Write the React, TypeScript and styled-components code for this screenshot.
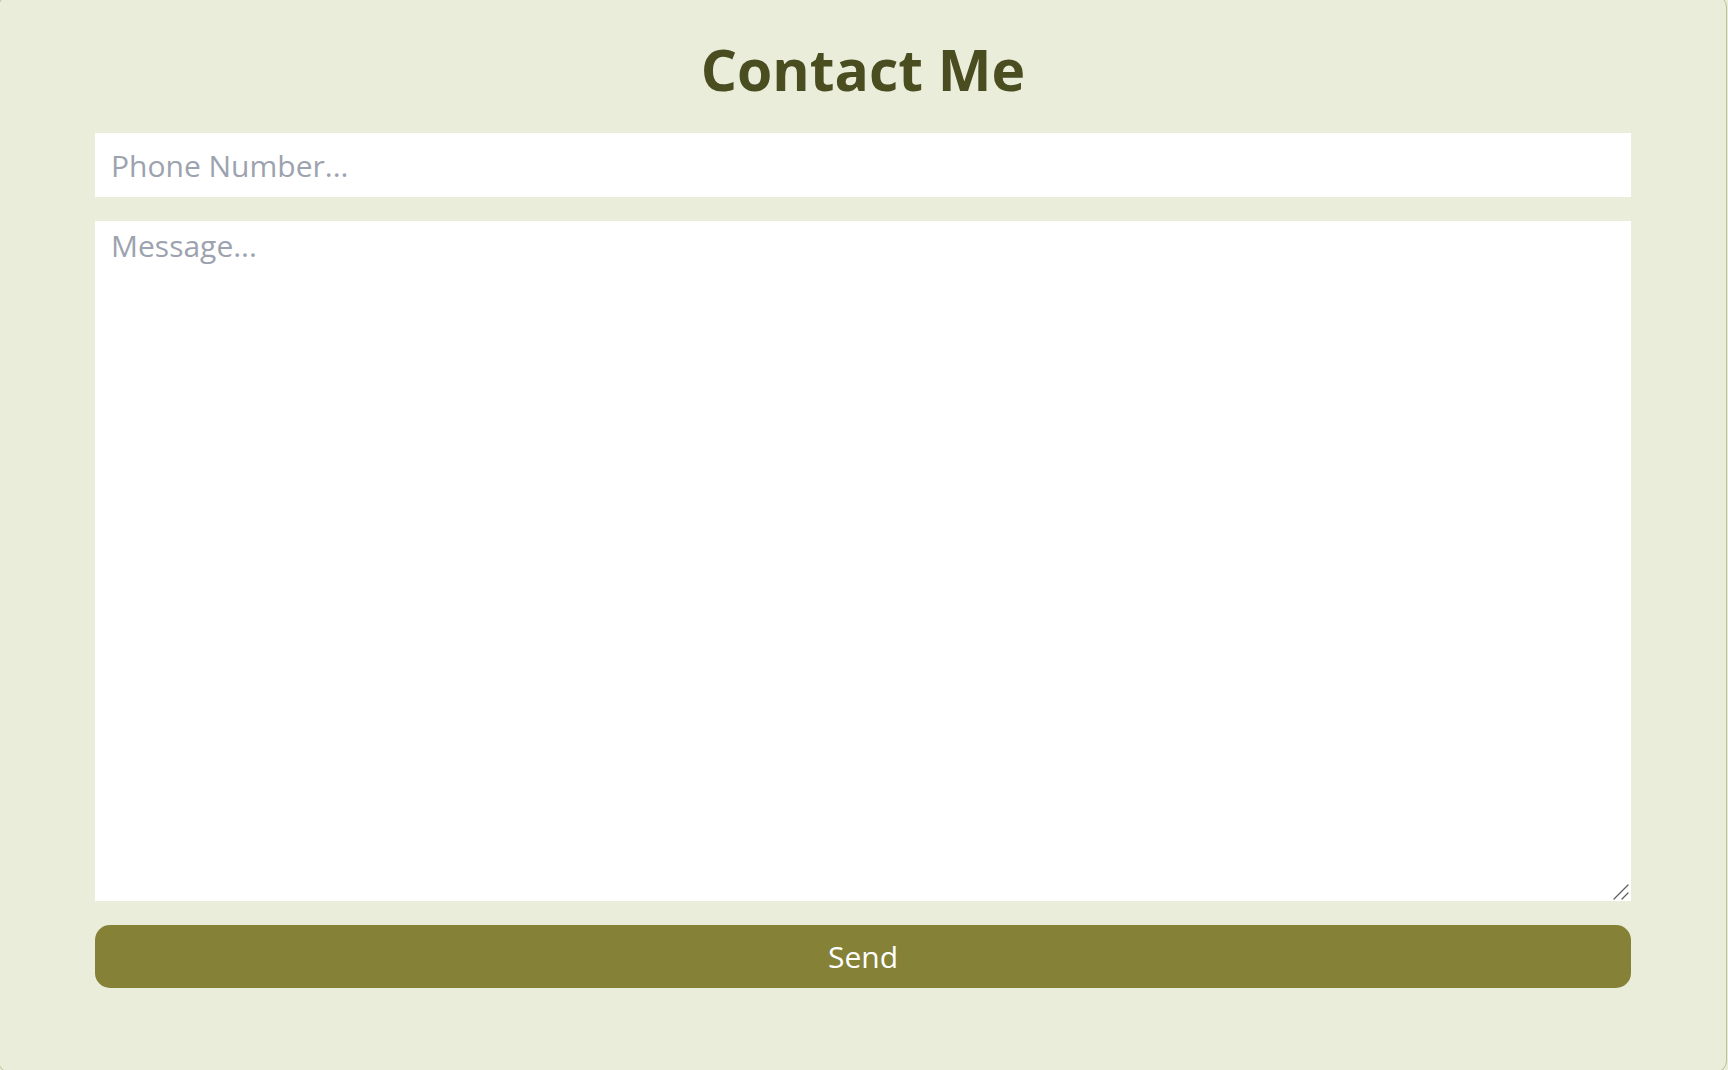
import React from "react";
import styled, { createGlobalStyle } from "styled-components";

const Global = createGlobalStyle`
  html, body { margin: 0; padding: 0; background: #eaedda; overflow: hidden; }
  body { font-family: "Open Sans", "Noto Sans", sans-serif; }
  * { box-sizing: border-box; }
`;

const Card = styled.section`
  width: 1729px;
  height: 1078px;
  margin: -5px 0 0 -2px;
  background: #eaedda;
  border: 1px solid #bcc096;
  border-radius: 12px;
  padding: 33px 95px 0 96px;
  display: flex;
  flex-direction: column;
  align-items: center;
`;

const Title = styled.h1`
  margin: 0 0 24px;
  height: 80px;
  font-family: "Open Sans", sans-serif;
  font-weight: 700;
  font-size: 57px;
  line-height: 80px;
  color: #4a4d20;
`;

const Form = styled.form`
  width: 100%;
  display: flex;
  flex-direction: column;
  gap: 24px;
`;

const fieldBase = `
  display: block;
  width: 100%;
  border: none;
  outline: none;
  background: #ffffff;
  font-family: "Open Sans", sans-serif;
  font-size: 30px;
  color: #333;
  padding: 0 16px;
  &::placeholder { color: #9ca3af; }
`;

const Input = styled.input`
  ${fieldBase}
  height: 64px;
`;

const AreaWrap = styled.div`
  position: relative;
  width: 100%;
`;

const TextArea = styled.textarea`
  ${fieldBase}
  height: 680px;
  padding-top: 4px;
  resize: vertical;
  &::-webkit-resizer { background: transparent; }
`;

const Grip = styled.svg`
  position: absolute;
  right: 2px;
  bottom: 1px;
  width: 16px;
  height: 16px;
  pointer-events: none;
`;

const Button = styled.button`
  width: 100%;
  height: 63px;
  border: none;
  border-radius: 15px;
  background: #858136;
  color: #ffffff;
  font-family: "Open Sans", sans-serif;
  font-size: 30px;
  cursor: pointer;
`;

export default function App() {
  return (
    <>
      <Global />
      <Card>
        <Title>Contact Me</Title>
        <Form onSubmit={(e) => e.preventDefault()}>
          <Input type="tel" placeholder="Phone Number..." />
          <AreaWrap>
            <TextArea placeholder="Message..." />
            <Grip viewBox="0 0 16 16">
              <path d="M1 15 L15 1 M9 15 L15 9" stroke="#5f5f5f" strokeWidth="1.3" strokeLinecap="round" fill="none" />
            </Grip>
          </AreaWrap>
          <Button type="submit">Send</Button>
        </Form>
      </Card>
    </>
  );
}
